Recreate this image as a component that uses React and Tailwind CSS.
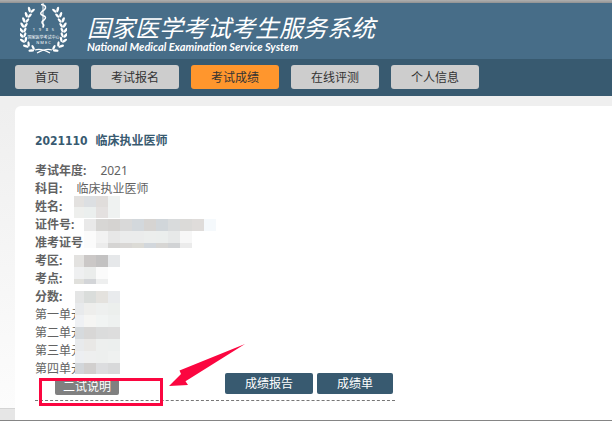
import React from "react";

const NAV = ["首页", "考试报名", "考试成绩", "在线评测", "个人信息"];

// x, y and tilt of each pair of leaves, from the top of the branch down
const LEAVES = [
  [11, 7, 14],
  [8, 12, 10],
  [5.5, 17, 6],
  [4, 22, 0],
  [3, 27, -6],
  [3, 32, -12],
  [4, 37, -24],
  [7, 42, -40],
  [12, 46, -62],
];

function Branch() {
  return (
    <g fill="#fff">
      {LEAVES.map(([x, y, r]) => (
        <g key={y} transform={`translate(${x} ${y}) rotate(${r})`}>
          <ellipse cx="-1.500" cy="-.8" rx="1.300" ry="2.900" transform="rotate(-30)" />
          <ellipse cx="1.700" cy="-.8" rx="1.200" ry="2.700" transform="rotate(34)" />
        </g>
      ))}
      <path d="M15 47Q21 45 30 50" fill="none" stroke="#fff" strokeWidth="1.200" />
    </g>
  );
}

function Emblem() {
  return (
    <svg width="47" height="52" viewBox="0 0 47 52" role="img" aria-label="国家医学考试中心" className="shrink-0">
      <Branch />
      <g transform="translate(47 0) scale(-1 1)">
        <Branch />
      </g>
      <path d="M23 0V25" stroke="#fff" strokeWidth="1" />
      <path
        d="M21 1.500Q26 2 25.500 5Q25 7 22 8.500Q19 11 23 12.500Q27.500 14 24 17Q20.500 19 23 21Q24.500 22 23 24"
        fill="none"
        stroke="#fff"
        strokeWidth="1.500"
      />
      <g fill="#fff" textAnchor="middle" fontFamily="'Noto Sans', 'Noto Sans CJK SC', sans-serif" fontSize="4">
        <text x="14" y="28">1</text>
        <text x="20" y="28">9</text>
        <text x="27" y="28">8</text>
        <text x="33" y="28">5</text>
        <text x="23.500" y="36">国家医学考试中心</text>
        <text x="23.500" y="41">N M E C</text>
      </g>
    </svg>
  );
}

function Mosaic({ className, cols, rows }) {
  const width = cols.reduce((a, b) => a + b, 0);
  const height = rows.reduce((a, r) => a + r.h, 0);
  let y = 0;
  return (
    <svg className={`absolute ${className}`} width={width} height={height} shapeRendering="crispEdges" aria-hidden="true">
      {rows.map((r, j) => {
        let x = 0;
        const cells = r.c.map((fill, i) => {
          const cell = <rect key={i} x={x} y={y} width={cols[i]} height={r.h} fill={fill} />;
          x += cols[i];
          return cell;
        });
        y += r.h;
        return <g key={j}>{cells}</g>;
      })}
    </svg>
  );
}

function Row({ label, children }) {
  return (
    <div className="flex gap-3.5">
      <dt className="font-bold">{label}</dt>
      <dd>{children}</dd>
    </div>
  );
}

export default function App() {
  return (
    <div className="flex min-h-screen flex-col border-b border-[#858585] bg-[#efefef] font-['Noto_Sans','Noto_Sans_CJK_SC',sans-serif] text-xs text-[#626262]">
      <div className="h-[3px] bg-linear-to-b from-[#b0b0b0] to-[#929292]" />
      <header className="flex h-14 items-start gap-5 bg-[#476d88] pl-5 text-white">
        <Emblem />
        <div className="pt-3.5 whitespace-nowrap italic">
          <h1 className="font-['Roboto','Noto_Sans_CJK_SC',sans-serif] text-2xl leading-6">国家医学考试考生服务系统</h1>
          <p className="font-['Lato',sans-serif] text-[11px] leading-3 font-bold">
            National Medical Examination Service System
          </p>
        </div>
      </header>
      <nav className="flex gap-3 bg-[#385a70] px-[15px] pt-1.5 pb-[7px]">
        {NAV.map((item) => (
          <a
            key={item}
            href="#"
            aria-current={item === "考试成绩" ? "page" : undefined}
            className={`rounded-[3px] px-5 pt-0.5 text-xs leading-[22px] whitespace-nowrap text-[#333] ${
              item === "考试成绩" ? "bg-[#ff962d]" : "bg-[#cdcdcd]"
            }`}
          >
            {item}
          </a>
        ))}
      </nav>
      <div className="flex flex-1 pt-2.5">
        <div className="flex w-[15px] shrink-0 flex-col">
          <div className="flex-1 bg-linear-to-b from-[#efefef] to-[#fcfcfc]" />
          <div className="h-3 border-t border-[#d4d4d4] bg-[#e6e6e6]" />
        </div>
        <main className="relative flex-1 rounded-tl-md bg-white pt-[26px] pl-5">
          <h2 className="flex gap-2 leading-[18px] font-bold text-[#385a70]">
            <span className="font-['DejaVu_Sans_Condensed','DejaVu_Sans',sans-serif]">2021110</span>
            <span>临床执业医师</span>
          </h2>
          <dl className="pt-3 leading-[18px]">
            <Row label="考试年度:">2021</Row>
            <Row label="科目:">临床执业医师</Row>
            <Row label="姓名:" />
            <Row label="证件号:" />
            <Row label="准考证号" />
            <Row label="考区:" />
            <Row label="考点:" />
            <Row label="分数:" />
          </dl>
          <ul className="leading-[18px]">
            <li>第一单元</li>
            <li>第二单元</li>
            <li>第三单元</li>
            <li>第四单元</li>
          </ul>
          <div className="flex w-[360px] items-end border-b border-dashed border-[#777] pb-[5px] pl-5">
            <button className="rounded-[2px] bg-[#808080] px-2 pt-px leading-4 text-white">二试说明</button>
            <div className="ml-auto flex gap-1 pr-0.5 pb-px">
              <button className="-mt-4 rounded-[2px] bg-[#385a70] px-5 leading-[21px] text-white">成绩报告</button>
              <button className="-mt-4 rounded-[2px] bg-[#385a70] px-5 leading-[21px] text-white">成绩单</button>
            </div>
          </div>

          <Mosaic
            className="top-[90px] left-[59px]"
            cols={[10, 12, 12, 12]}
            rows={[
              { h: 11, c: ["#e3e1df", "#dcdfe2", "#e0dddb", "#eff2f1"] },
              { h: 11, c: ["#eeefed", "#ebefee", "#e4e1e0", "#eff2f1"] },
            ]}
          />
          <Mosaic
            className="top-[113px] left-[69px]"
            cols={[12, 12, 12, 12, 12, 12, 12, 12, 12, 12, 12]}
            rows={[
              { h: 12, c: ["#e9e9e9", "#d7d6d4", "#d5d3d1", "#d9d9d9", "#d3d8dc", "#d6d4d2", "#d1d6da", "#d9dbdc", "#dbdad8", "#dfdcda", "#f5f9fc"] },
              { h: 12, c: ["#fbfbfb", "#f2f2f2", "#e7e7e7", "#ebecec", "#ebecec", "#eceeed", "#ebeeed", "#e7e9e9", "#f7f7f7", "none", "none"] },
              { h: 5, c: ["#fbfbfb", "#ececec", "#d5d4d3", "#d9d7d5", "#dcdbd6", "#d2d7dc", "#d7d6d4", "#d1d3d5", "#ebebeb", "none", "none"] },
            ]}
          />
          <Mosaic
            className="top-[149px] left-[59px]"
            cols={[10, 12, 12, 12]}
            rows={[
              { h: 12, c: ["#e3e2e0", "#cbc8c7", "#c3c2c2", "#e6e8ea"] },
              { h: 12, c: ["#eff0f1", "#ebedec", "#fbfbfb", "none"] },
              { h: 5, c: ["#e0e0dc", "#d3d5d8", "#eeefef", "none"] },
            ]}
          />
          <Mosaic
            className="top-[185px] left-[60px]"
            cols={[9, 12, 12, 12]}
            rows={[
              { h: 12, c: ["#e4e5e5", "#dadddb", "#e4e2de", "#e9ebed"] },
              { h: 12, c: ["#e8eaec", "#eeeeec", "#eef0ef", "#ecefed"] },
              { h: 12, c: ["#eff1f4", "#f5f5f3", "#f1f4f3", "#eef1f0"] },
              { h: 12, c: ["#d6dadd", "#d8d7d6", "#dbdcdc", "#dddddd"] },
              { h: 12, c: ["#e8eaec", "#e9e8e6", "#edefee", "#ecefee"] },
              { h: 12, c: ["#edeff2", "#eeefef", "#edefee", "#eff1f0"] },
              { h: 11, c: ["#d2d6da", "#d1cfce", "#dcdddf", "#d8d9da"] },
            ]}
          />

          <div className="absolute top-[272px] left-6 h-7 w-[124px] border-3 border-[#fb0640]" />
          <svg className="absolute top-[238px] left-[154px]" width="78" height="44" viewBox="0 0 78 44" aria-hidden="true">
            <path d="M76 0L10.500 26.500L12 30L0 42L19 41L16.500 37.300Z" fill="#fb0640" />
          </svg>
        </main>
      </div>
    </div>
  );
}
